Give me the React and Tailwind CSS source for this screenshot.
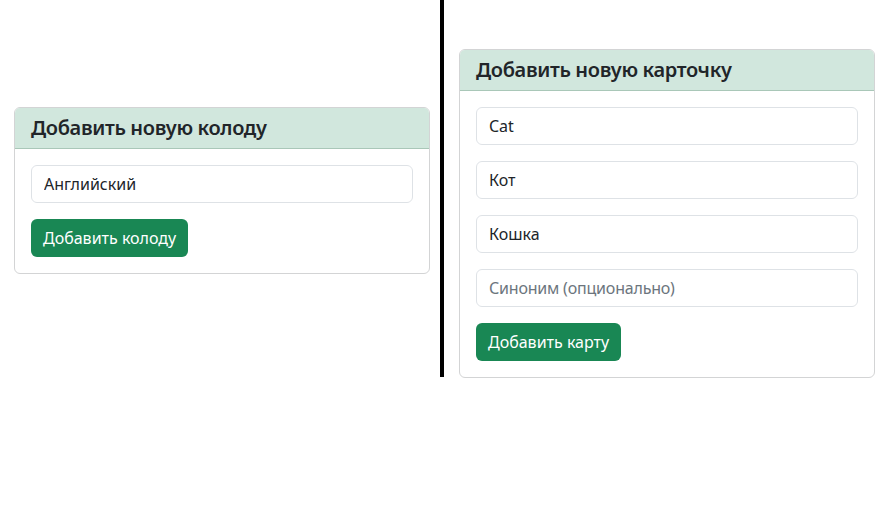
import React, { useState } from 'react';

const font = { fontFamily: '"Noto Sans", "Open Sans", sans-serif' };

const Field = ({ value, onChange, placeholder }) => (
  <input
    value={value}
    onChange={(e) => onChange(e.target.value)}
    placeholder={placeholder}
    className="block w-full h-[38px] px-3 border border-[#dee2e6] rounded-md text-[16px] text-[#212529] placeholder:text-[#6c757d] placeholder:tracking-[-0.2px] outline-none bg-white"
  />
);

const Card = ({ title, children }) => (
  <div className="w-[416px] border border-[#d3d4d5] rounded-md bg-white overflow-hidden">
    <div className="h-[41px] px-4 flex items-center bg-[#d1e7dd] border-b border-[#a9c7b8]">
      <h5 className="text-[20px] font-semibold tracking-[-0.35px] leading-6 text-[#212529]">{title}</h5>
    </div>
    <div className="p-4 flex flex-col gap-4">{children}</div>
  </div>
);

const Button = ({ children }) => (
  <button className="self-start h-[38px] px-3 rounded-md bg-[#198754] text-white text-[16px] leading-6">
    {children}
  </button>
);

export default function App() {
  const [deck, setDeck] = useState('Английский');
  const [word, setWord] = useState('Cat');
  const [tr1, setTr1] = useState('Кот');
  const [tr2, setTr2] = useState('Кошка');
  const [syn, setSyn] = useState('');

  return (
    <div className="w-[892px] h-[520px] bg-white" style={font}>
      <div className="flex items-start">
        <div className="w-[440px] pl-[14px] pt-[107px]">
          <Card title="Добавить новую колоду">
            <Field value={deck} onChange={setDeck} />
            <Button>Добавить колоду</Button>
          </Card>
        </div>
        <div className="w-1 h-[377px] bg-black" />
        <div className="pl-[15px] pt-[49px]">
          <Card title="Добавить новую карточку">
            <Field value={word} onChange={setWord} />
            <Field value={tr1} onChange={setTr1} />
            <Field value={tr2} onChange={setTr2} />
            <Field value={syn} onChange={setSyn} placeholder="Синоним (опционально)" />
            <Button>Добавить карту</Button>
          </Card>
        </div>
      </div>
    </div>
  );
}
